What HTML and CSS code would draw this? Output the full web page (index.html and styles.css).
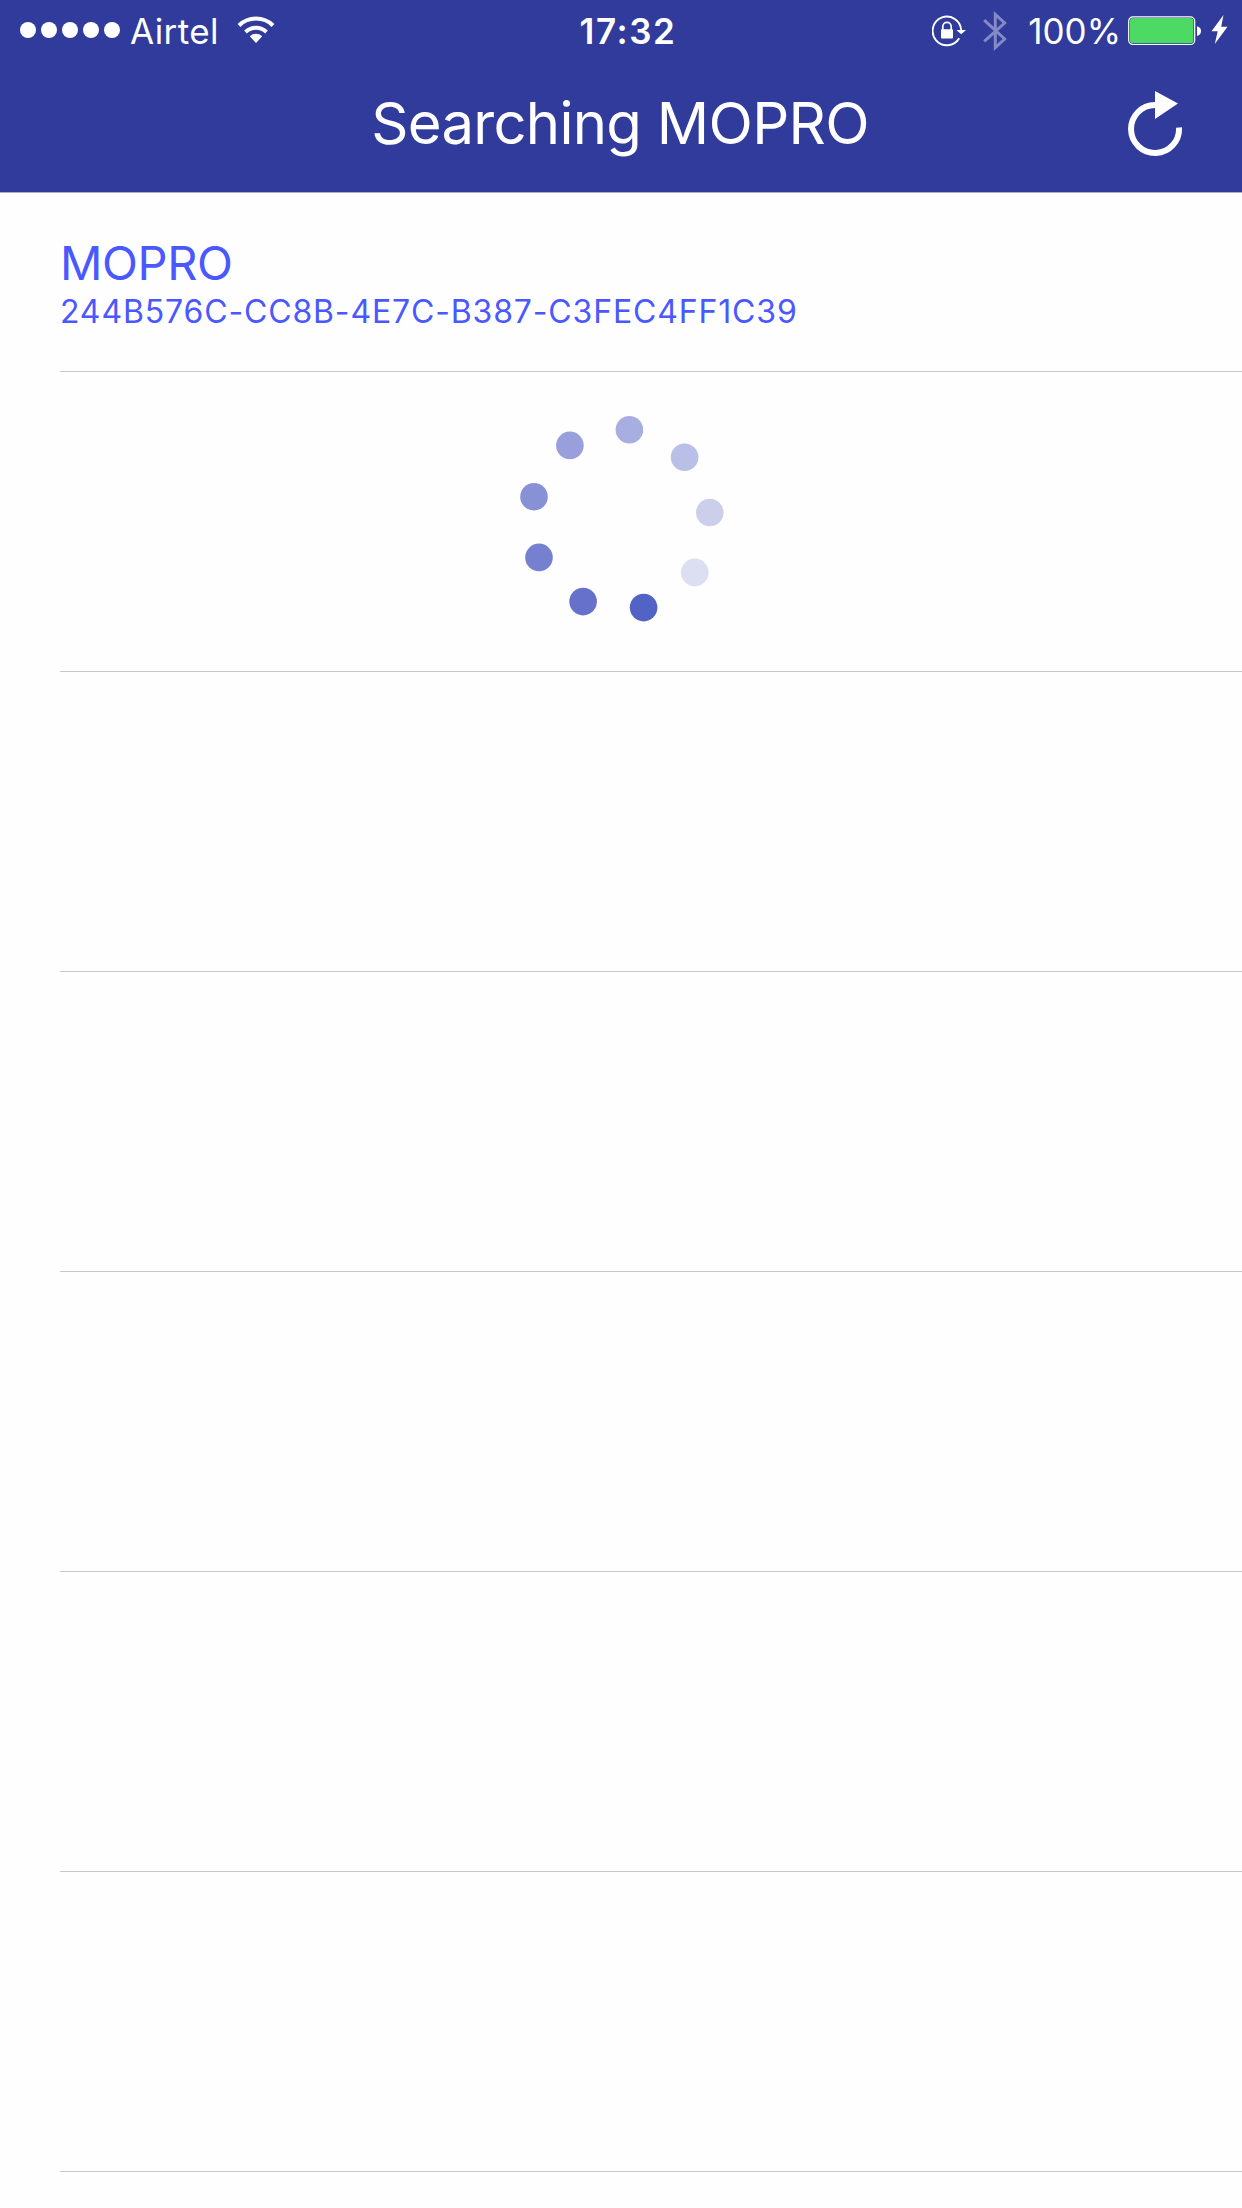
FILE: index.html
```html
<!DOCTYPE html>
<html lang="en">
<head>
    <meta charset="UTF-8">
    <title>Searching MOPRO</title>
    <link rel="stylesheet" href="styles.css">
</head>
<body>
    <header class="header">
        <div class="status-bar">
            <div class="status-left">
                <div class="signal"><i></i><i></i><i></i><i></i><i></i></div>
                <span class="carrier">Airtel</span>
                <svg class="wifi" width="38" height="28" viewBox="0 0 38 28">
                    <path d="M2 9.5a24.3 24.3 0 0 1 34 0M8.5 16a15.2 15.2 0 0 1 21 0" fill="none" stroke="#fff" stroke-width="4"/>
                    <path d="M12.8 20.3a9 9 0 0 1 12.4 0L19 27z" fill="#fff"/>
                </svg>
            </div>
            <span class="clock">17:32</span>
            <div class="status-right">
                <svg class="lock" width="35" height="32" viewBox="0 0 35 32">
                    <path d="M27.2 23.3A14.3 14.3 0 1 1 29.2 15" fill="none" stroke="#fff" stroke-width="1.9"/>
                    <path d="M24.4 15h9.6l-4.8 4.3z" fill="#fff"/>
                    <path d="M10.8 15V11.5a4.2 4.2 0 0 1 8.4 0V15" fill="none" stroke="#fff" stroke-width="1.7"/>
                    <rect x="9" y="14.2" width="12" height="9.3" rx=".8" fill="#fff"/>
                </svg>
                <svg class="bluetooth" width="24" height="42" viewBox="0 0 24 42">
                    <path d="M1.2 10.2L21.6 29 12.3 37.5V4.5L21.6 13 1.2 31.4" fill="none" stroke="#838ac4" stroke-width="3"/>
                </svg>
                <span class="percent">100%</span>
                <svg class="battery" width="74" height="30" viewBox="0 0 74 30">
                    <rect x=".7" y=".9" width="66" height="27.6" rx="4.2" fill="none" stroke="#fff" stroke-width="1.2"/>
                    <rect x="2" y="2.1" width="63.4" height="25.2" rx="3" fill="#4cd964"/>
                    <path d="M69 10.2q4 1 4 4.8t-4 5z" fill="#fff"/>
                </svg>
                <svg class="bolt" width="17" height="29" viewBox="0 0 17 29">
                    <path d="M12.5 0L.5 16.2h6.2L3.8 29 16.5 11.8h-6.3z" fill="#fff"/>
                </svg>
            </div>
        </div>
        <div class="nav">
            <h1>Searching MOPRO</h1>
            <svg class="refresh" width="56" height="66" viewBox="0 0 56 66">
                <path d="M27 14A24 24 0 1 0 51 36.5" fill="none" stroke="#fff" stroke-width="6"/>
                <path d="M27 0v28l23-15.5z" fill="#fff"/>
            </svg>
        </div>
    </header>

    <ul class="devices">
        <li class="device">
            <div class="name">MOPRO</div>
            <div class="uuid">244B576C-CC8B-4E7C-B387-C3FEC4FF1C39</div>
        </li>
        <li class="loading">
            <svg class="spinner" width="210" height="210" viewBox="0 0 210 210">
                <circle cx="114.4" cy="14.8" r="13.8" fill="#a7aee1"/>
                <circle cx="169.6" cy="42.2" r="13.8" fill="#babfe7"/>
                <circle cx="194.8" cy="97.5" r="13.8" fill="#cbcfec"/>
                <circle cx="179.8" cy="157.4" r="13.8" fill="#dcdff2"/>
                <circle cx="128.6" cy="192.6" r="13.8" fill="#5262c5"/>
                <circle cx="68.1" cy="186.6" r="13.8" fill="#6571cb"/>
                <circle cx="24" cy="142.4" r="13.8" fill="#7580d1"/>
                <circle cx="19" cy="81.7" r="13.8" fill="#8791d6"/>
                <circle cx="54.9" cy="30.4" r="13.8" fill="#989fdc"/>
            </svg>
        </li>
        <li></li>
        <li></li>
        <li></li>
        <li></li>
        <li></li>
    </ul>
</body>
</html>
```

FILE: styles.css
```css
* {
    box-sizing: border-box;
}

body {
    margin: 0;
    height: 2208px;
    overflow: hidden;
    background: #fefefe;
    font-family: Inter, "Liberation Sans", sans-serif;
}

.header {
    height: 193px;
    background: #303b9c;
    border-bottom: 1px solid #b2b2b2;
    color: #fff;
}

/* status bar */
.status-bar {
    display: grid;
    grid-template-columns: 1fr auto 1fr;
    height: 60px;
    padding: 0 14px 0 20px;
    font-size: 35px;
    line-height: 62px;
}

.status-left,
.status-right {
    display: flex;
    align-items: flex-start;
}

.status-right {
    justify-content: flex-end;
}

.signal {
    display: flex;
    gap: 5px;
    margin-top: 22px;
}

.signal i {
    width: 16px;
    height: 16px;
    border-radius: 50%;
    background: #fff;
}

.carrier {
    margin-left: 10px;
    letter-spacing: .4px;
}

.wifi {
    margin: 16px 0 0 18px;
}

.clock {
    margin-left: 8px;
    font-weight: 600;
    letter-spacing: 1.6px;
}

.lock {
    margin-top: 15px;
}

.bluetooth {
    margin: 10px 0 0 16px;
}

.percent {
    margin-left: 21px;
}

.battery {
    margin: 16px 0 0 7px;
}

.bolt {
    margin: 15px 0 0 9px;
}

/* title bar */
.nav {
    display: grid;
    grid-template-columns: 1fr auto 1fr;
    height: 132px;
    padding-right: 58px;
    padding-left: 56px;
}

.nav h1 {
    grid-column: 2;
    margin: 0;
    font-size: 58px;
    font-weight: 400;
    letter-spacing: -.7px;
    line-height: 126px;
    white-space: nowrap;
}

.refresh {
    justify-self: end;
    margin-top: 31px;
}

/* device list */
.devices {
    margin: 0;
    padding: 0 0 0 60px;
    list-style: none;
}

.devices li {
    height: 300px;
    border-bottom: 1px solid #c8c7cc;
}

.devices .device {
    height: 179px;
    padding-top: 40px;
    color: #4a58ff;
}

.name {
    font-size: 47px;
    letter-spacing: -.4px;
    line-height: 60px;
}

.uuid {
    font-size: 32px;
    letter-spacing: .85px;
    line-height: 38px;
}

.loading {
    display: flex;
    justify-content: center;
    padding: 43px 62px 0 0;
}
```
